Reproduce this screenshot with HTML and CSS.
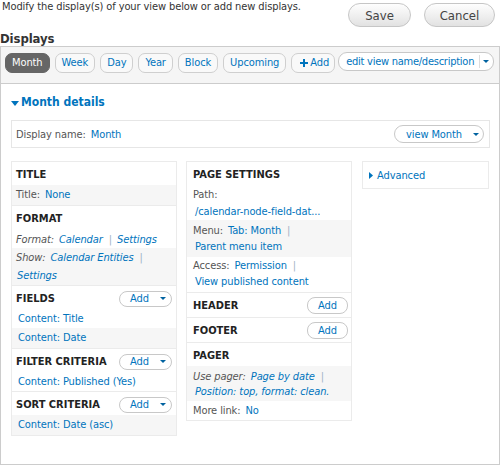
FILE: index.html
```html
<!DOCTYPE html>
<html lang="en">
<head>
<meta charset="utf-8">
<title>Views UI</title>
<link rel="stylesheet" href="styles.css">
</head>
<body>
<div class="top">
  <p class="desc">Modify the display(s) of your view below or add new displays.</p>
  <div class="actions">
    <button class="btn btn-save">Save</button>
    <button class="btn btn-cancel">Cancel</button>
  </div>
</div>
<h2 class="displays-title">Displays</h2>
<div class="box">
  <div class="tabbar">
    <a class="tab active">Month</a>
    <a class="tab">Week</a>
    <a class="tab">Day</a>
    <a class="tab">Year</a>
    <a class="tab">Block</a>
    <a class="tab">Upcoming</a>
    <a class="tab tab-add"><svg class="plus" width="8" height="8" viewBox="0 0 8 8"><path d="M3 0h2v3h3v2H5v3H3V5H0V3h3z" fill="#0074bd"/></svg>Add</a>
    <span class="drop drop-edit"><span class="drop-text">edit view name/description</span><span class="drop-sep"></span><span class="caret"></span></span>
  </div>
  <div class="content">
    <h3 class="details-title"><svg class="tri-down" width="8" height="5" viewBox="0 0 8 5"><path d="M0 0h8L4 5z" fill="#0074bd"/></svg>Month details</h3>
    <div class="dname">
      <span><span class="label">Display name:</span><a>Month</a></span>
      <span class="drop drop-view"><span class="drop-text">view Month</span><span class="drop-sep"></span><span class="caret"></span></span>
    </div>
    <div class="cols">
      <div class="col col1">
        <div class="section">
          <div class="head">Title</div>
          <div class="row shade r20"><span class="label">Title:</span><a>None</a></div>
        </div>
        <div class="section">
          <div class="head">Format</div>
          <div class="row it r-format"><span class="label">Format:</span><a>Calendar</a><span class="pipe">|</span><a>Settings</a></div>
          <div class="row it shade r-show"><span class="label">Show:</span><a>Calendar Entities</a><span class="pipe">|</span><a class="l2">Settings</a></div>
        </div>
        <div class="section">
          <div class="head">Fields<span class="addbtn addbtn-drop">Add<span class="caret"></span></span></div>
          <div class="row r19"><a class="ind">Content: Title</a></div>
          <div class="row shade r20"><a class="ind">Content: Date</a></div>
        </div>
        <div class="section">
          <div class="head">Filter criteria<span class="addbtn addbtn-drop">Add<span class="caret"></span></span></div>
          <div class="row r19"><a class="ind">Content: Published (Yes)</a></div>
        </div>
        <div class="section">
          <div class="head">Sort criteria<span class="addbtn addbtn-drop">Add<span class="caret"></span></span></div>
          <div class="row shade r20"><a class="ind">Content: Date (asc)</a></div>
        </div>
      </div>
      <div class="col col2">
        <div class="section">
          <div class="head">Page settings</div>
          <div class="row r-path"><span class="label">Path:</span><a class="l2">/calendar-node-field-dat...</a></div>
          <div class="row shade r-menu"><span class="label">Menu:</span><a>Tab: Month</a><span class="pipe">|</span><a class="l2">Parent menu item</a></div>
          <div class="row r-access"><span class="label">Access:</span><a>Permission</a><span class="pipe">|</span><a class="l2">View published content</a></div>
        </div>
        <div class="section">
          <div class="head head-tall">Header<span class="addbtn addbtn-plain">Add</span></div>
        </div>
        <div class="section">
          <div class="head head-tall">Footer<span class="addbtn addbtn-plain">Add</span></div>
        </div>
        <div class="section">
          <div class="head">Pager</div>
          <div class="row it shade r-pager"><span class="label">Use pager:</span><a>Page by date</a><span class="pipe">|</span><a class="l2">Position: top, format: clean.</a></div>
          <div class="row r19"><span class="label">More link:</span><a>No</a></div>
        </div>
      </div>
      <div class="col col3">
        <div class="adv"><svg class="tri-right" width="4" height="7" viewBox="0 0 4 7"><path d="M0 0l4 3.5L0 7z" fill="#0074bd"/></svg><a>Advanced</a></div>
      </div>
    </div>
  </div>
</div>
</body>
</html>
```
FILE: styles.css
```css
body {
  margin: 0;
  font-family: "DejaVu Sans Condensed", "DejaVu Sans", sans-serif;
  font-size: 11px;
  letter-spacing: -0.1px;
  color: #333;
  background: #fff;
}
a { color: #0074bd; text-decoration: none; }

.top {
  display: flex;
  justify-content: space-between;
  height: 31px;
}
.desc {
  margin: 0;
  padding-left: 2px;
  line-height: 13px;
}
.actions {
  display: flex;
  gap: 13px;
  padding: 3px 5px 0 0;
  align-items: flex-start;
}
.btn {
  height: 24px;
  box-sizing: border-box;
  border: 1px solid #c6c6c6;
  border-radius: 12px;
  background: linear-gradient(#fefefe, #e2e2e2);
  font-family: "DejaVu Sans Condensed", "DejaVu Sans", sans-serif;
  font-size: 13px;
  color: #444;
  padding: 0;
  text-align: center;
}
.btn-save { width: 63px; }
.btn-cancel { width: 71px; }

.displays-title {
  margin: 0;
  height: 15px;
  font-size: 13px;
  line-height: 15px;
  font-weight: bold;
  color: #333;
}

.box {
  border: 1px solid #ccc;
  height: 417px;
}
.tabbar {
  display: flex;
  align-items: flex-start;
  gap: 5px;
  height: 30px;
  padding: 6px 4px 0;
  background: #f5f5f5;
  border-bottom: 1px solid #ccc;
  white-space: nowrap;
}
.tab {
  flex-shrink: 0;
  height: 20px;
  box-sizing: border-box;
  padding: 0 6px;
  border: 1px solid #cfcfcf;
  border-radius: 7px;
  background: #f9f9f9;
  line-height: 18px;
  display: flex;
  align-items: center;
}
.tab.active {
  background: #666;
  border-color: #666;
  color: #fff;
}
.tab-add { padding: 0 5px 0 8px; }
.plus { margin-right: 2px; }

.drop {
  flex-shrink: 0;
  white-space: nowrap;
  display: flex;
  align-items: center;
  box-sizing: border-box;
  background: #fff;
  border: 1px solid #c8c8c8;
  border-radius: 9px;
  color: #0074bd;
}
.drop-sep {
  width: 1px;
  align-self: stretch;
  margin: 2px 0;
  background: #ddd;
}
.caret {
  width: 0;
  height: 0;
  border-left: 3px solid transparent;
  border-right: 3px solid transparent;
  border-top: 3px solid #0062a0;
}
.drop-edit {
  height: 19px;
  margin-top: -1px;
  margin-left: -2px;
  padding: 0 4px 0 7px;
}
.drop-edit .drop-text { letter-spacing: -0.25px; }
.drop-edit .drop-sep { margin-left: 5px; margin-right: 3px; }

.content {
  padding: 0 9px 0 10px;
}
.details-title {
  margin: 10px 0 10px;
  display: flex;
  align-items: center;
  font-size: 12px;
  line-height: 16px;
  font-weight: bold;
  color: #0074bd;
  letter-spacing: 0;
}
.tri-down { margin: 2px 2px 0 0; }

.dname {
  height: 26px;
  border: 1px solid #e6e6e6;
  display: flex;
  align-items: center;
  justify-content: space-between;
  padding: 0 5px 0 4px;
}
.label { color: #555; margin-right: 5px; }
.drop-view {
  height: 18px;
  width: 90px;
  padding: 0 4px 0 11px;
}
.drop-view .drop-sep { margin-left: 6px; margin-right: 5px; }

.cols {
  display: flex;
  align-items: flex-start;
  margin-top: 13px;
}
.col {
  box-sizing: border-box;
  border: 1px solid #ebebeb;
}
.col1 { width: 166px; }
.col2 { width: 166px; margin-left: 9px; }
.col3 { width: 127px; margin-left: 10px; }

.section + .section { border-top: 1px solid #ebebeb; }
.head {
  display: flex;
  align-items: center;
  justify-content: space-between;
  height: 21px;
  padding-top: 2px;
  font-weight: bold;
  text-transform: uppercase;
  color: #222;
  letter-spacing: 0;
}
.head-tall { height: 24px; padding-top: 0; }
.col1 .head, .col1 .row { padding-left: 4px; padding-right: 4px; }
.col2 .head { padding-left: 6px; padding-right: 3px; }
.col2 .row { padding-left: 6px; padding-right: 3px; }

.row { line-height: 15px; white-space: nowrap; }
.shade { background: #f6f6f6; }
.it { font-style: italic; }
.pipe { color: #9fb3c6; margin: 0 5px 0 6px; }
.l2 { display: block; padding-left: 2px; }
.ind { padding-left: 2px; }

.r19 { padding-top: 2px; padding-bottom: 2px; }
.r20 { padding-top: 2px; padding-bottom: 3px; }
.r-format { padding-top: 3px; padding-bottom: 1px; }
.r-show { padding-top: 1px; line-height: 18px; }
.r-show .l2 { padding-left: 1px; }
.r-path { padding-top: 1px; line-height: 17px; }
.r-menu { padding-top: 3px; padding-bottom: 2px; line-height: 16px; }
.r-access { padding-top: 1px; padding-bottom: 2px; line-height: 16px; }
.r-pager { padding-top: 3px; padding-bottom: 2px; }

.addbtn {
  box-sizing: border-box;
  display: flex;
  align-items: center;
  background: #fff;
  border: 1px solid #c8c8c8;
  font-weight: normal;
  text-transform: none;
  color: #0074bd;
  letter-spacing: -0.1px;
}
.addbtn-drop {
  width: 53px;
  height: 16px;
  border-radius: 8px;
  padding: 0 5px 0 10px;
  justify-content: space-between;
}
.addbtn-plain {
  width: 41px;
  height: 17px;
  border-radius: 8px;
  justify-content: center;
}

.adv {
  height: 26px;
  display: flex;
  align-items: center;
  padding-left: 6px;
}
.tri-right { margin-right: 4px; }
```
